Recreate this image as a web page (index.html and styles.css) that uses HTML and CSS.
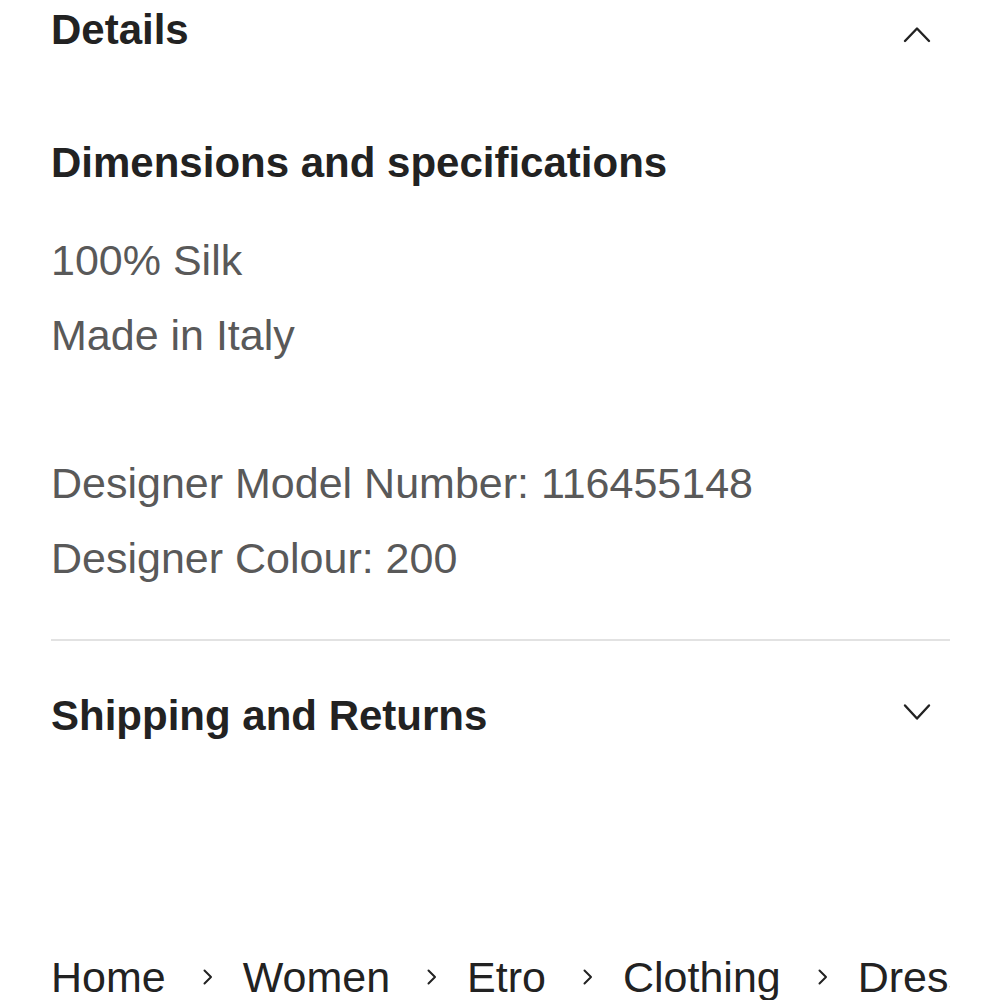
FILE: index.html
```html
<!DOCTYPE html>
<html>
<head>
  <meta charset="UTF-8" />
  <title>Etro Silk Dress - Details</title>
  <link rel="stylesheet" href="styles.css">
</head>
<body>
  <div class="page">
    <section class="accordion open">
      <div class="acc-head">
        <h2>Details</h2>
        <svg class="chev chev-up" width="28" height="17" viewBox="0 0 28 17">
          <path d="M2 15 L14 2.5 L26 15" />
        </svg>
      </div>
      <div class="acc-body">
        <h3>Dimensions and specifications</h3>
        <p class="first">100% Silk</p>
        <p>Made in Italy</p>
        <p class="spaced">Designer Model Number: 116455148</p>
        <p>Designer Colour: 200</p>
      </div>
    </section>

    <section class="accordion">
      <div class="acc-head shipping">
        <h2>Shipping and Returns</h2>
        <svg class="chev chev-down" width="28" height="18" viewBox="0 0 28 18">
          <path d="M2 2.5 L14 15.5 L26 2.5" />
        </svg>
      </div>
    </section>

    <nav class="breadcrumb">
      <a href="#">Home</a>
      <svg class="crumb-sep" width="10" height="16" viewBox="0 0 10 16"><path d="M1.5 1.5 L8 8 L1.5 14.5" /></svg>
      <a href="#">Women</a>
      <svg class="crumb-sep" width="10" height="16" viewBox="0 0 10 16"><path d="M1.5 1.5 L8 8 L1.5 14.5" /></svg>
      <a href="#">Etro</a>
      <svg class="crumb-sep" width="10" height="16" viewBox="0 0 10 16"><path d="M1.5 1.5 L8 8 L1.5 14.5" /></svg>
      <a href="#">Clothing</a>
      <svg class="crumb-sep" width="10" height="16" viewBox="0 0 10 16"><path d="M1.5 1.5 L8 8 L1.5 14.5" /></svg>
      <a href="#">Dresses</a>
    </nav>
  </div>
</body>
</html>
```

FILE: styles.css
```css
:root {
  --text-strong: #222222;
  --text-muted: #595959;
  --border-color: #e2e2e2;
}

* {
  margin: 0;
  padding: 0;
  box-sizing: border-box;
}

body {
  font-family: "Liberation Sans", Arial, sans-serif;
  background-color: #ffffff;
  color: var(--text-strong);
  overflow: hidden;
}

.page {
  padding: 6px 50px 0 51px;
}

.acc-head {
  display: flex;
  justify-content: space-between;
  align-items: flex-start;
}

.acc-head h2 {
  font-size: 42px;
  font-weight: 700;
  line-height: 48px;
  color: var(--text-strong);
}

.chev {
  margin-right: 19px;
  flex-shrink: 0;
}

.chev path,
.crumb-sep path {
  fill: none;
  stroke: var(--text-strong);
  stroke-linecap: round;
  stroke-linejoin: round;
}

.chev path {
  stroke-width: 2.4;
}

.chev-up {
  margin-top: 20px;
}

.chev-down {
  margin-top: 11px;
}

.accordion.open {
  border-bottom: 2px solid var(--border-color);
}

.acc-body {
  padding-bottom: 43px;
}

.acc-body h3 {
  margin-top: 85px;
  font-size: 42px;
  font-weight: 700;
  line-height: 48px;
  color: var(--text-strong);
}

.acc-body p {
  font-size: 43px;
  line-height: 75px;
  color: var(--text-muted);
}

.acc-body p.first {
  margin-top: 36px;
}

.acc-body p.spaced {
  margin-top: 73px;
}

.acc-head.shipping {
  padding-top: 51px;
}

.breadcrumb {
  margin-top: 213px;
  display: flex;
  align-items: center;
  white-space: nowrap;
  overflow: hidden;
  font-size: 43px;
  line-height: 48px;
}

.breadcrumb a {
  color: var(--text-strong);
  text-decoration: none;
  flex-shrink: 0;
}

.crumb-sep {
  flex-shrink: 0;
  margin: 0 30px 0 37px;
}

.crumb-sep path {
  stroke-width: 2;
}
```
